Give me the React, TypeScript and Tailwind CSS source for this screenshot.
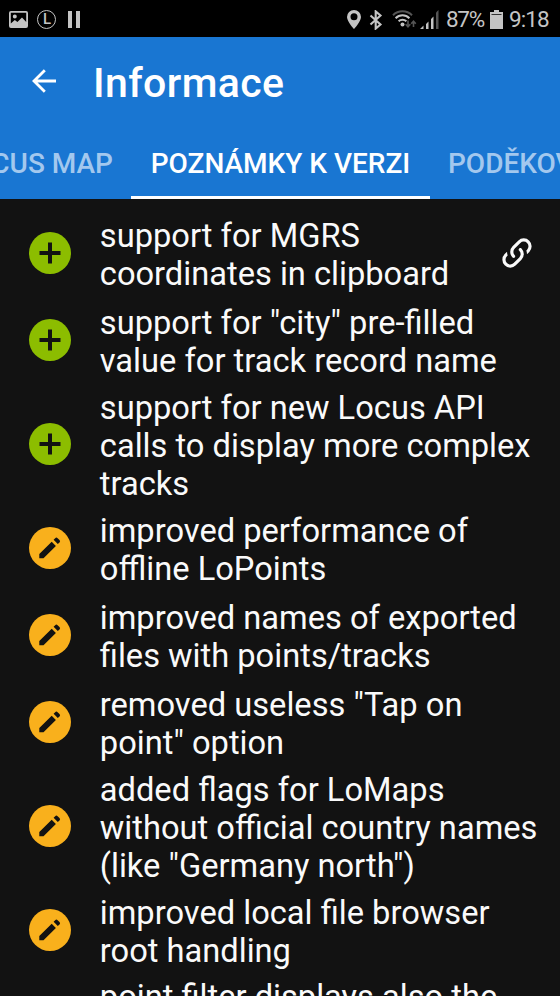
import React, { ReactNode } from "react";

type NoteKind = "added" | "improved";

interface Note {
  kind: NoteKind;
  lines: string[];
  link?: boolean;
}

const notes: Note[] = [
  {
    kind: "added",
    lines: ["support for MGRS", "coordinates in clipboard"],
    link: true,
  },
  {
    kind: "added",
    lines: ['support for "city" pre-filled', "value for track record name"],
  },
  {
    kind: "added",
    lines: [
      "support for new Locus API",
      "calls to display more complex",
      "tracks",
    ],
  },
  {
    kind: "improved",
    lines: ["improved performance of", "offline LoPoints"],
  },
  {
    kind: "improved",
    lines: ["improved names of exported", "files with points/tracks"],
  },
  {
    kind: "improved",
    lines: ['removed useless "Tap on', 'point" option'],
  },
  {
    kind: "improved",
    lines: [
      "added flags for LoMaps",
      "without official country names",
      '(like "Germany north")',
    ],
  },
  {
    kind: "improved",
    lines: ["improved local file browser", "root handling"],
  },
];

function StatusBar() {
  return (
    <div className="flex h-[37px] shrink-0 items-center bg-black pt-0.5 pl-[9px] text-[#c4c4c4]">
      <svg width="19" height="17" viewBox="0 0 19 17">
        <path
          fill="currentColor"
          fillRule="evenodd"
          d="M2 0h15a2 2 0 0 1 2 2v13a2 2 0 0 1-2 2H2a2 2 0 0 1-2-2V2a2 2 0 0 1 2-2zM1.8 1.8v10.7l4-3.5 2.6 2 4.6-4.5 4.2 4.5V1.8zM5.8 3.6a2 2 0 1 1 0 4 2 2 0 0 1 0-4z"
        />
      </svg>
      <div className="ml-[9px] flex size-[19px] items-center justify-center rounded-full border border-[#c4c4c4] pl-px text-[15px] leading-none font-medium">
        L
      </div>
      <div className="ml-[12px] flex gap-[4px]">
        <span className="h-[17px] w-1 bg-[#c4c4c4]" />
        <span className="h-[17px] w-1 bg-[#c4c4c4]" />
      </div>
      <svg width="14" height="19" viewBox="0 0 14 19" className="ml-[267px]">
        <path
          fill="currentColor"
          fillRule="evenodd"
          d="M7 0a7 7 0 0 1 7 7c0 4.500-7 12-7 12S0 11.500 0 7a7 7 0 0 1 7-7zm0 3.300a3.500 3.500 0 1 0 0 7 3.500 3.500 0 0 0 0-7z"
        />
      </svg>
      <svg width="14" height="20" viewBox="0 0 14 20" className="ml-[8px]">
        <path
          d="M1.500 5.500l10 9-4.800 4.100V1.400l4.800 4.100-10 9"
          fill="none"
          stroke="currentColor"
          strokeWidth="2.100"
        />
      </svg>
      <svg width="26" height="19" viewBox="0 0 26 19" className="ml-[9px]">
        <g fill="none" stroke="currentColor" strokeWidth="2">
          <path d="M1 5.200a13.500 13.500 0 0 1 19 0" stroke="#555" />
          <path d="M3.600 8.200a9.800 9.800 0 0 1 13.800 0" />
          <path d="M6.600 11.300a5.600 5.600 0 0 1 7.800 0" />
        </g>
        <circle cx="10.500" cy="14.500" r="2" fill="currentColor" />
        <path
          d="M16 10.500v6m-2.300-2.300l2.300 2.600 2.300-2.600M21.500 17v-5.500m-2.300 2.300l2.300-2.600 2.300 2.600"
          fill="none"
          stroke="#555"
          strokeWidth="1.600"
        />
      </svg>
      <svg width="19" height="19" viewBox="0 0 19 19" className="ml-[2px]">
        <path
          fill="currentColor"
          d="M0 19l3.500-3.500V19zM6 14l2.500-2.500V19H6zM11 9l2.500-2.500V19H11z"
        />
        <path fill="#555" d="M16 2.500L18.500 0v19H16z" />
      </svg>
      <span className="ml-[7px] w-[37px] text-[22.5px] leading-none tracking-[-1.3px] whitespace-nowrap">
        87%
      </span>
      <svg width="13" height="19" viewBox="0 0 13 19" className="ml-[7px]">
        <path fill="currentColor" d="M4 0h5v2h4v17H0V2h4z" />
        <path fill="#333" d="M1.500 4h10v1h-10z" />
      </svg>
      <span className="ml-[6px] text-[22.5px] leading-none tracking-[-0.9px] whitespace-nowrap">
        9:18
      </span>
    </div>
  );
}

function Header() {
  return (
    <div className="flex h-[90px] items-center pl-[31px] text-white">
      <svg
        width="26"
        height="26"
        viewBox="0 0 26 26"
        fill="none"
        className="-mt-0.5"
      >
        <path
          d="M25 13H3M13.800 2.200L3 13l10.800 10.800"
          stroke="currentColor"
          strokeWidth="2.800"
        />
      </svg>
      <h1 className="ml-[36px] pt-0.5 text-[41px] leading-none font-medium tracking-[0.4px]">
        Informace
      </h1>
    </div>
  );
}

function Tab({
  children,
  active,
  className,
}: {
  children: ReactNode;
  active?: boolean;
  className?: string;
}) {
  return (
    <div
      className={`flex h-full shrink-0 items-center justify-center border-b-3 pt-[5px] whitespace-nowrap ${
        active ? "border-white text-white" : "border-transparent text-[#a3c8ee]"
      } ${className ?? ""}`}
    >
      {children}
    </div>
  );
}

function Tabs() {
  return (
    <div className="flex h-[72px] overflow-hidden text-[28px] font-medium">
      <Tab className="-ml-[70px] w-[201px] justify-end pr-[18px]">
        LOCUS MAP
      </Tab>
      <Tab active className="w-[299px]">
        POZNÁMKY K VERZI
      </Tab>
      <Tab className="pl-[18px]">PODĚKOVÁNÍ</Tab>
    </div>
  );
}

function NoteIcon({ kind }: { kind: NoteKind }) {
  return (
    <svg width="42" height="42" viewBox="0 0 42 42" className="shrink-0">
      <circle
        cx="21"
        cy="21"
        r="21"
        fill={kind === "added" ? "#8cbd00" : "#f9b01c"}
      />
      {kind === "added" ? (
        <path d="M21 10.500v21M10.500 21h21" stroke="#121212" strokeWidth="4" />
      ) : (
        <path
          fill="#121212"
          d="M10.300 27L22.700 14.700l4.200 4.200L14.500 31.300h-4.200zM24.600 12.800l1.600-1.600a1.700 1.700 0 0 1 2.400 0l1.900 1.900a1.700 1.700 0 0 1 0 2.400l-1.700 1.500z"
        />
      )}
    </svg>
  );
}

function LinkIcon() {
  return (
    <svg
      width="38"
      height="38"
      viewBox="0 0 24 24"
      fill="#fafafa"
      className="mr-[24.5px] ml-auto shrink-0"
    >
      <path d="M10.590 13.410c.41.390.41 1.030 0 1.420-.39.390-1.030.39-1.420 0a5.003 5.003 0 0 1 0-7.070l3.540-3.540a5.003 5.003 0 0 1 7.070 0 5.003 5.003 0 0 1 0 7.070l-1.490 1.490c.01-.82-.12-1.640-.4-2.420l.47-.48a2.982 2.982 0 0 0 0-4.240 2.982 2.982 0 0 0-4.240 0l-3.530 3.530a2.982 2.982 0 0 0 0 4.240m2.820-4.240c.39-.39 1.030-.39 1.420 0a5.003 5.003 0 0 1 0 7.070l-3.540 3.540a5.003 5.003 0 0 1-7.070 0 5.003 5.003 0 0 1 0-7.070l1.490-1.490c-.01.82.12 1.640.4 2.430l-.47.470a2.982 2.982 0 0 0 0 4.240 2.982 2.982 0 0 0 4.240 0l3.530-3.530a2.982 2.982 0 0 0 0-4.240.973.973 0 0 1 0-1.420z" />
    </svg>
  );
}

function NoteText({ lines }: { lines: string[] }) {
  return (
    <p className="ml-[29px] pt-1 text-[32.65px] leading-[38px] whitespace-nowrap">
      {lines.map((line) => (
        <span key={line} className="block">
          {line}
        </span>
      ))}
    </p>
  );
}

function NoteRow({ note }: { note: Note }) {
  return (
    <li className="flex min-h-[87px] items-center py-[1.5px] pl-[28.8px]">
      <NoteIcon kind={note.kind} />
      <NoteText lines={note.lines} />
      {note.link ? <LinkIcon /> : null}
    </li>
  );
}

export default function App() {
  return (
    <div className="flex h-[996px] w-[560px] flex-col overflow-hidden bg-[#121212] font-[Roboto,sans-serif]">
      <StatusBar />
      <header className="shrink-0 bg-[#1976d2]">
        <Header />
        <Tabs />
      </header>
      <ul className="min-h-0 flex-1 overflow-hidden pt-[10px] text-[#fafafa]">
        {notes.map((note) => (
          <NoteRow key={note.lines[0]} note={note} />
        ))}
        {/* next entry, only its first line reaches the screen */}
        <li className="pt-px pl-[70.8px]">
          <NoteText lines={["point filter displays also the"]} />
        </li>
      </ul>
    </div>
  );
}
